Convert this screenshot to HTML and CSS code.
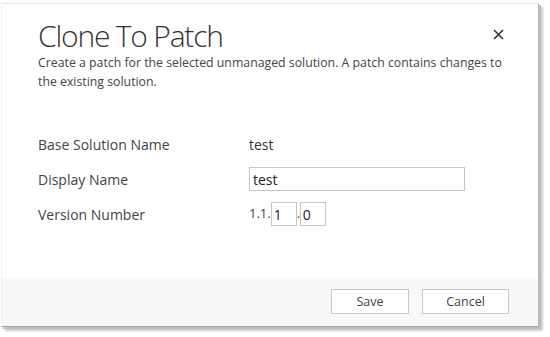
FILE: index.html
```html
<!DOCTYPE html>
<html lang="en">
<head>
    <meta charset="UTF-8">
    <title>Clone To Patch</title>
    <link rel="stylesheet" href="styles.css">
</head>
<body>
    <div class="dialog">
        <div class="dialog-body">
            <div class="dialog-header">
                <h1>Clone To Patch</h1>
                <span class="close-btn">
                    <svg width="11" height="11" viewBox="0 0 11 11"><path d="M1 1 L10 10 M10 1 L1 10" stroke="#333" stroke-width="1.6"/></svg>
                </span>
            </div>
            <p class="description">Create a patch for the selected unmanaged solution. A patch contains changes to the existing solution.</p>

            <div class="form">
                <div class="form-row">
                    <label>Base Solution Name</label>
                    <span class="value">test</span>
                </div>
                <div class="form-row">
                    <label>Display Name</label>
                    <input type="text" class="text-input" value="test">
                </div>
                <div class="form-row">
                    <label>Version Number</label>
                    <div class="version">
                        <span>1.1.</span>
                        <input type="text" class="num-input" value="1">
                        <span class="dot">.</span>
                        <input type="text" class="num-input" value="0">
                    </div>
                </div>
            </div>
        </div>

        <div class="dialog-footer">
            <button class="btn btn-save">Save</button>
            <button class="btn btn-cancel">Cancel</button>
        </div>
    </div>
</body>
</html>
```

FILE: styles.css
```css
* {
    margin: 0;
    padding: 0;
    box-sizing: border-box;
}

body {
    font-family: "Open Sans", "Noto Sans", sans-serif;
    background: white;
    width: 550px;
    height: 337px;
    padding: 3px 0 0 1px;
}

.dialog {
    width: 538px;
    height: 324px;
    background: white;
    border-top: 1px solid #e4e4e4;
    border-left: 1px solid #f0f0f0;
    border-right: 1px solid #b8b8b8;
    border-bottom: 1px solid #a8a8a8;
    box-shadow: 2px 2px 0 #bdbdbd, 4px 4px 2px rgba(0, 0, 0, 0.2);
    display: flex;
    flex-direction: column;
}

.dialog-body {
    flex: 1;
    padding: 12px 0 0 36px;
}

.dialog-header {
    display: flex;
    justify-content: space-between;
    align-items: flex-start;
    padding-right: 34px;
}

.dialog-header h1 {
    font-weight: 300;
    font-size: 30px;
    color: #333;
    line-height: 40px;
    letter-spacing: -1.2px;
}

.close-btn {
    margin-top: 13px;
    line-height: 0;
}

.description {
    font-size: 12.3px;
    color: #444;
    line-height: 19px;
    width: 480px;
    margin-top: -3px;
}

.form {
    margin-top: 41px;
    display: flex;
    flex-direction: column;
    gap: 11px;
}

.form-row {
    display: flex;
    align-items: center;
    height: 24px;
    font-size: 14px;
    color: #444;
}

.form-row label {
    width: 211px;
}

.value {
    color: #333;
}

.text-input {
    width: 216px;
    height: 24px;
    border: 1px solid #c6c6c6;
    padding: 0 3px;
    font-family: inherit;
    font-size: 14px;
    color: #222;
}

.version {
    display: flex;
    align-items: center;
}

.version span {
    margin-top: -3px;
    font-size: 13px;
}

.version .dot {
    width: 3px;
}

.num-input {
    width: 26px;
    height: 24px;
    border: 1px solid #c6c6c6;
    padding: 0 2px;
    font-family: inherit;
    font-size: 14px;
    color: #222;
}

.dialog-footer {
    height: 48px;
    background: #f8f8f8;
    display: flex;
    justify-content: flex-end;
    align-items: flex-start;
    gap: 13px;
    padding: 11px 29px 0 0;
}

.btn {
    height: 25px;
    background: white;
    border: 1px solid #c8c8c8;
    font-family: inherit;
    font-size: 12.5px;
    color: #444;
}

.btn-save {
    width: 78px;
}

.btn-cancel {
    width: 87px;
}
```
